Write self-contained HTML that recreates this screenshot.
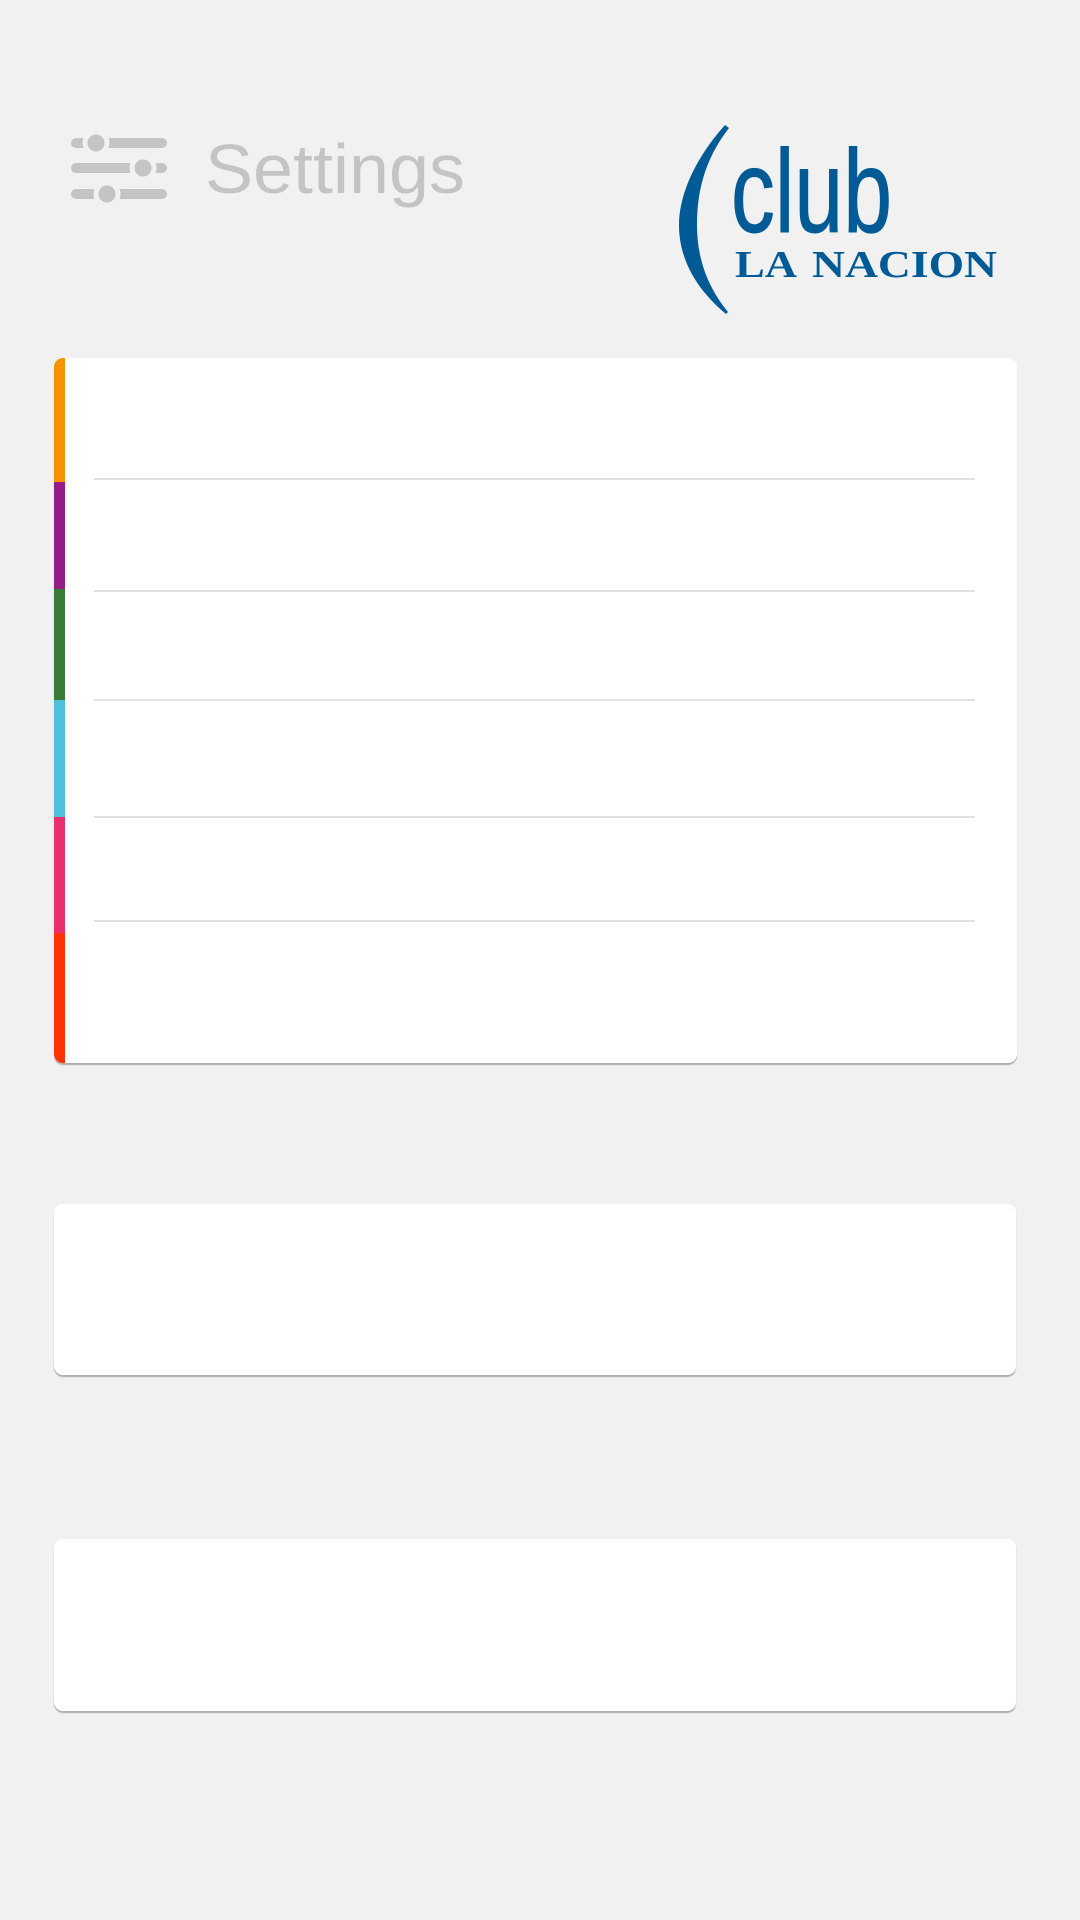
<!DOCTYPE html>
<html><head><meta charset="utf-8"><style>
html,body{margin:0;padding:0;}
body{width:1080px;height:1920px;background:#f1f1f1;position:relative;overflow:hidden;font-family:"Liberation Sans",sans-serif;}
.card{position:absolute;left:54px;width:963px;background:#fff;border-radius:9px;box-shadow:0 2px 1px rgba(0,0,0,0.28);overflow:hidden;}
.stripe{position:absolute;left:0;width:11px;}
.div{position:absolute;left:40px;width:881px;height:2px;background:#e2e2e2;}
</style></head><body>
<svg style="position:absolute;left:0;top:0" width="1080" height="340">
  <g fill="#c4c4c4">
    <rect x="71" y="138" width="96" height="10" rx="5"/>
    <rect x="71" y="163" width="96" height="10" rx="5"/>
    <rect x="71" y="189" width="96" height="10" rx="5"/>
  </g>
  <g fill="#c4c4c4" stroke="#f1f1f1" stroke-width="5">
    <circle cx="96" cy="143" r="11"/>
    <circle cx="143" cy="168" r="11"/>
    <circle cx="107" cy="194" r="11"/>
  </g>
  <text x="205" y="193" font-family="Liberation Sans, sans-serif" font-size="70" fill="#c4c4c4" textLength="260" lengthAdjust="spacingAndGlyphs">Settings</text>
  <path d="M725,125 C692,162 679,198 679,225 C679,258 695,288 726,314 L728,312 C706,285 697,256 697,225 C697,193 704,160 729,128 Z" fill="#005a96"/>
  <text x="731" y="232" font-family="Liberation Sans Narrow, Liberation Sans, sans-serif" font-size="118" fill="#005a96" stroke="#005a96" stroke-width="1" textLength="161" lengthAdjust="spacingAndGlyphs">club</text>
  <text x="735" y="277" font-family="Liberation Serif, serif" font-weight="bold" font-size="38" fill="#005a96" textLength="62" lengthAdjust="spacingAndGlyphs">LA</text>
  <text x="812" y="277" font-family="Liberation Serif, serif" font-weight="bold" font-size="38" fill="#005a96" textLength="185" lengthAdjust="spacingAndGlyphs">NACION</text>
</svg>
<div class="card" style="top:358px;height:705px;">
  <div class="stripe" style="top:0;height:124px;background:#f59300"></div>
  <div class="stripe" style="top:124px;height:107px;background:#951e86"></div>
  <div class="stripe" style="top:231px;height:111px;background:#3b7b3a"></div>
  <div class="stripe" style="top:342px;height:117px;background:#4fc0d9"></div>
  <div class="stripe" style="top:459px;height:116px;background:#e9316f"></div>
  <div class="stripe" style="top:575px;height:130px;background:#ff3300"></div>
  <div class="div" style="top:120px"></div>
  <div class="div" style="top:232px"></div>
  <div class="div" style="top:341px"></div>
  <div class="div" style="top:458px"></div>
  <div class="div" style="top:562px"></div>
</div>
<div class="card" style="top:1204px;height:171px;width:962px;"></div>
<div class="card" style="top:1539px;height:172px;width:962px;"></div>
</body></html>
